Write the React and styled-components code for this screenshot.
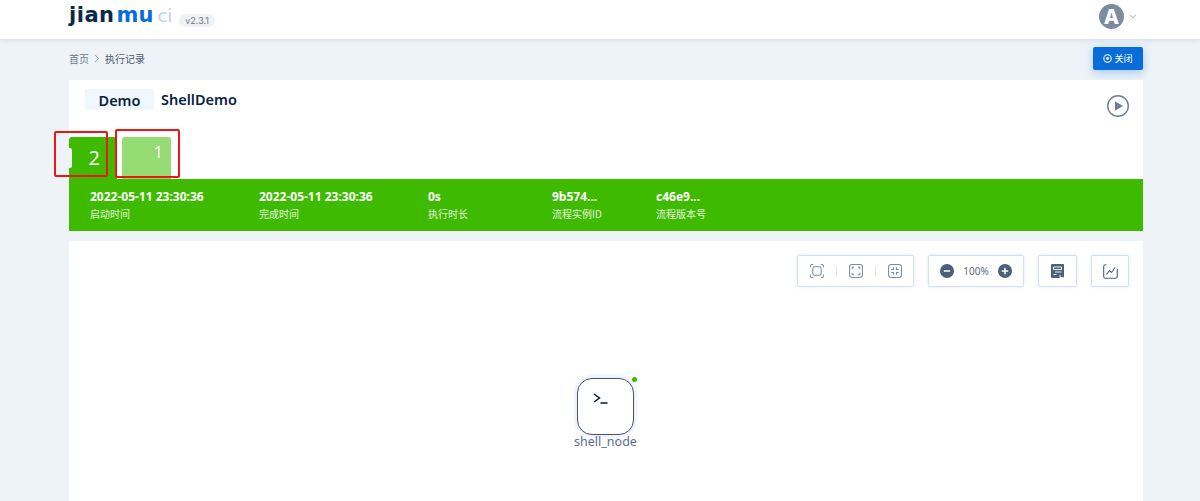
import React from 'react';
import styled, { createGlobalStyle } from 'styled-components';

const Global = createGlobalStyle`
  html, body { margin: 0; padding: 0; height: 501px; overflow: hidden; background: #eef3f8; }
  body { font-family: "Noto Sans CJK SC", "Noto Sans", sans-serif; color: #082340; }
  * { box-sizing: border-box; }
`;
const Page = styled.div`width: 1200px; height: 501px; overflow: hidden; display: flex; flex-direction: column;`;
const Header = styled.header`
  height: 39px; flex: none; background: #fff; box-shadow: 0 1px 6px rgba(174,190,222,.45);
  display: flex; align-items: center; justify-content: space-between; padding: 0 63px 0 69px; position: relative; z-index: 2;
`;
const Brand = styled.div`display: flex; align-items: center; gap: 7px; margin-bottom: 10px;`;
const Logo = styled.div`
  font-family: "DejaVu Sans", sans-serif; font-weight: 700; font-size: 21px; line-height: 24px; height: 24px; letter-spacing: 0.5px;
  display: flex; align-items: baseline; color: #0b2a4a;
`;
const LogoMu = styled.span`color: #096dd9; margin-left: 2px; letter-spacing: 0;`;
const LogoCi = styled.span`color: #b6d4f6; font-size: 18px; font-weight: 400; margin-left: 4px; letter-spacing: 0;`;
const Version = styled.span`
  font-family: "Inter", sans-serif; font-size: 9px; line-height: 13px; color: #6b7b8d; background: #f0f1f3; border-radius: 7px; padding: 0 6px;
  margin-top: 11px; height: 13px;
`;
const User = styled.div`display: flex; align-items: center; gap: 5px; margin-bottom: 6px;`;
const Avatar = styled.div`
  width: 25px; height: 25px; border-radius: 50%; background: #7b8c9f; color: #fff; display: flex; align-items: center; justify-content: center;
  font-family: "Inter", sans-serif; font-weight: 800; font-size: 20px;
`;
const Main = styled.main`flex: 1; padding: 0 57px 0 69px; display: flex; flex-direction: column; position: relative;`;
const TopRow = styled.div`height: 41px; display: flex; align-items: center; justify-content: space-between;`;
const Crumbs = styled.div`display: flex; align-items: center; gap: 5px; font-size: 10px; color: #6b7b8d; margin-bottom: 2px;`;
const CrumbNow = styled.span`color: #4a5a6c;`;
const CloseBtn = styled.button`
  width: 50px; height: 23px; margin-bottom: 2px; border: 0; border-radius: 2px; background: #096dd9; color: #fff; font: 9px "Noto Sans CJK SC", sans-serif;
  display: flex; align-items: center; justify-content: center; gap: 2px; padding: 0; box-shadow: 0 3px 10px rgba(9,109,217,.3);
`;
const Card = styled.section`height: 99px; background: #fff; position: relative; display: flex; flex-direction: column;`;
const TitleRow = styled.div`height: 57px; padding: 9px 15px 0 16px; display: flex; align-items: flex-start; justify-content: space-between;`;
const Titles = styled.div`display: flex; align-items: center; gap: 7px;`;
const Project = styled.span`
  width: 69px; height: 21px; background: #f0f7ff; color: #082340; display: flex; align-items: center; justify-content: center;
  font-family: "Noto Sans", sans-serif; font-weight: 600; font-size: 14.5px;
`;
const Flow = styled.span`font-family: "Noto Sans", sans-serif; font-weight: 600; font-size: 14.5px; color: #082340; line-height: 21px;`;
const PlayBtn = styled.div`width: 24px; height: 24px; margin-top: 5px; margin-right: -2px;`;
const Tabs = styled.div`height: 42px; display: flex; gap: 5px; align-items: flex-end;`;
const Tab = styled.div`
  width: ${p => p.$w}px; height: 42px; border-radius: 3px 3px 0 0; position: relative; color: #fff;
  background: ${p => (p.$active ? '#3ebb00' : '#96dc74')};
  display: flex; justify-content: flex-end; align-items: flex-start;
  font-family: "Open Sans", "Noto Sans", sans-serif;
  font-size: ${p => (p.$active ? 20 : 16)}px; line-height: 1;
  padding: ${p => (p.$active ? '11px 17px 0 0' : '7px 8px 0 0')};
`;
const TabNotch = styled.span`position: absolute; left: 0; top: 11px; width: 3px; height: 20px; background: #eef3f8; border-radius: 0 2px 2px 0;`;
const Mark = styled.div`
  position: absolute; border: 2px solid #f01414; border-radius: 2px; pointer-events: none; z-index: 3;
  left: ${p => p.$l}px; top: ${p => p.$t}px; width: ${p => p.$w}px; height: ${p => p.$h}px;
`;
const Stats = styled.div`height: 52px; background: #3ebb00; padding: 10px 0 0 21px; display: flex; color: #fff;`;
const Stat = styled.div`width: ${p => p.$w}px; display: flex; flex-direction: column; gap: 2px;`;
const StatValue = styled.div`font-family: "Noto Sans", sans-serif; font-weight: 700; font-size: 12px; line-height: 16px;`;
const StatLabel = styled.div`font-size: 10px; line-height: 14px; opacity: .85;`;
const Canvas = styled.section`margin-top: 10px; flex: 1; background: #fff; position: relative; display: flex; flex-direction: column; align-items: center;`;
const Tools = styled.div`align-self: flex-end; margin: 14px 14px 0 0; display: flex; gap: 14px;`;
const ToolBox = styled.div`
  height: 32px; width: ${p => p.$w}px; background: #fff; border: 1px solid #d6e0f5; border-radius: 2px; box-shadow: 0 0 3px rgba(190,205,240,.5);
  display: flex; align-items: center; justify-content: center; gap: ${p => p.$gap || 0}px;
`;
const Sep = styled.span`width: 1px; height: 10px; background: #dfe5ee;`;
const Zoom = styled.span`font-family: "Noto Sans", sans-serif; font-size: 10px; color: #5b6c7e; width: 44px; text-align: center;`;
const Node = styled.div`position: relative; margin-top: 91px; width: 90px; display: flex; flex-direction: column; align-items: center; margin-right: 1px;`;
const NodeBox = styled.div`
  width: 57px; height: 57px; background: #fff; border: 1px solid #4a5560; border-radius: 15px; box-shadow: 0 0 6px rgba(170,195,245,.6);
  padding: 14px 0 0 15px;
`;
const NodeIcon = styled.svg`display: block;`;
const Dot = styled.span`position: absolute; top: -1px; right: 14px; width: 5px; height: 5px; border-radius: 50%; background: #3ebb00;`;
const NodeName = styled.div`font-family: "Noto Sans", sans-serif; font-size: 12.5px; line-height: 14px; color: #5a6d88; margin-top: 0;`;

const C = '#7b8c9f', D = '#4b6079';
const FitIcon = ({ type }) => (
  <svg width="14" height="14" viewBox="0 0 15 15" fill="none" stroke={C} strokeWidth="1.1">
    {type === 0 ? (<>
      <rect x="3" y="3" width="9" height="9" rx="2" />
      <path d="M.6 3.5V2Q.6.6 2 .6h1.5M11.5.6H13q1.4 0 1.4 1.4v1.5M14.4 11.5V13q0 1.4-1.4 1.4h-1.5M3.5 14.4H2Q.6 14.4.6 13v-1.5" />
    </>) : (<>
      <rect x=".6" y=".6" width="13.8" height="13.8" rx="3" />
      {type === 1
        ? <path d="M3.5 5.5V3.5h2M9.5 3.5h2v2M11.5 9.5v2h-2M5.5 11.5h-2v-2" />
        : <path d="M6 3.5V6H3.5M9 3.5V6h2.5M11.5 9H9v2.5M3.5 9H6v2.5" />}
    </>)}
  </svg>
);
const Round = ({ plus }) => (
  <svg width="14" height="14" viewBox="0 0 14 14">
    <circle cx="7" cy="7" r="7" fill={D} />
    <path d={plus ? 'M3.8 7h6.4M7 3.8v6.4' : 'M3.8 7h6.4'} stroke="#fff" strokeWidth="1.5" />
  </svg>
);

export default function App() {
  return (
    <Page>
      <Global />
      <Header>
        <Brand>
          <Logo>jian<LogoMu>mu</LogoMu><LogoCi>ci</LogoCi></Logo>
          <Version>v2.3.1</Version>
        </Brand>
        <User>
          <Avatar>A</Avatar>
          <svg width="8" height="5" viewBox="0 0 9 6" fill="none" stroke="#7b8c9f" strokeWidth="0.9"><path d="M1 1l3.5 3.5L8 1" /></svg>
        </User>
      </Header>
      <Main>
        <TopRow>
          <Crumbs>
            <span>首页</span>
            <svg width="6" height="9" viewBox="0 0 6 9" fill="none" stroke="#8a98a8" strokeWidth="0.9"><path d="M1 .8l3.6 3.7L1 8.2" /></svg>
            <CrumbNow>执行记录</CrumbNow>
          </Crumbs>
          <CloseBtn>
            <svg width="9" height="9" viewBox="0 0 9 9" fill="none" stroke="#fff"><circle cx="4.5" cy="4.5" r="3.7" strokeWidth="1.1" /><circle cx="4.5" cy="4.5" r="1.4" fill="#fff" stroke="none" /></svg>
            关闭
          </CloseBtn>
        </TopRow>
        <Card>
          <TitleRow>
            <Titles>
              <Project>Demo</Project>
              <Flow>ShellDemo</Flow>
            </Titles>
            <PlayBtn>
              <svg width="24" height="24" viewBox="0 0 24 24" fill="none">
                <circle cx="12" cy="12" r="10.3" stroke="#6b7f95" strokeWidth="1.4" />
                <path d="M9 7.2v9.6l8-4.8z" fill="#6b7f95" />
              </svg>
            </PlayBtn>
          </TitleRow>
          <Tabs>
            <Tab $active $w={48}><TabNotch />2</Tab>
            <Tab $w={49}>1</Tab>
          </Tabs>
          <Mark $l={-15} $t={51} $w={54} $h={46} />
          <Mark $l={46} $t={49} $w={65} $h={49} />
        </Card>
        <Stats>
          <Stat $w={169}><StatValue>2022-05-11 23:30:36</StatValue><StatLabel>启动时间</StatLabel></Stat>
          <Stat $w={169}><StatValue>2022-05-11 23:30:36</StatValue><StatLabel>完成时间</StatLabel></Stat>
          <Stat $w={124}><StatValue>0s</StatValue><StatLabel>执行时长</StatLabel></Stat>
          <Stat $w={104}><StatValue>9b574...</StatValue><StatLabel>流程实例ID</StatLabel></Stat>
          <Stat $w={100}><StatValue>c46e9...</StatValue><StatLabel>流程版本号</StatLabel></Stat>
        </Stats>
        <Canvas>
          <Tools>
            <ToolBox $w={117} $gap={12}>
              <FitIcon type={0} /><Sep /><FitIcon type={1} /><Sep /><FitIcon type={2} />
            </ToolBox>
            <ToolBox $w={96}>
              <Round /><Zoom>100%</Zoom><Round plus />
            </ToolBox>
            <ToolBox $w={39}>
              <svg width="13" height="14" viewBox="0 0 13 14">
                <rect width="13" height="14" rx="1" fill={D} />
                <path d="M2.5 3h8v2.5h-8zM4 8h6.5M2.5 10.5h3" stroke="#fff" strokeWidth="0.9" fill="none" />
                <path d="M9 11v2.5h3.5" stroke="#fff" strokeWidth="1" fill="none" />
              </svg>
            </ToolBox>
            <ToolBox $w={38}>
              <svg width="15" height="15" viewBox="0 0 15 15" fill="none" stroke={D} strokeWidth="1.1">
                <path d="M3.5.7H2.5Q.7.7.7 2.5v10q0 1.8 1.8 1.8h10q1.8 0 1.8-1.8V5" />
                <path d="M3.5 10.5l3-4 2 2 3.5-5" />
              </svg>
            </ToolBox>
          </Tools>
          <Node>
            <NodeBox>
              <NodeIcon width="15" height="12" viewBox="0 0 15 12" fill="none" stroke="#0b1a2a" strokeWidth="1.5">
                <path d="M1 1l5.5 4L1 9M7.5 10h7" />
              </NodeIcon>
            </NodeBox>
            <Dot />
            <NodeName>shell_node</NodeName>
          </Node>
        </Canvas>
      </Main>
    </Page>
  );
}
